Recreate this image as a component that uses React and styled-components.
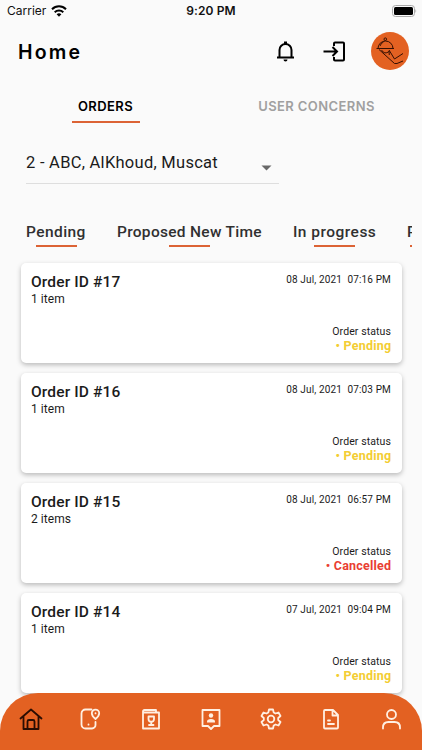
import React from "react";
import styled, { createGlobalStyle } from "styled-components";

const GlobalStyle = createGlobalStyle`
  * {
    box-sizing: border-box;
  }
  body {
    margin: 0;
    background: #fafafa;
    font-family: Roboto, "Liberation Sans", sans-serif;
    color: #1b1b1b;
  }
`;
const Screen = styled.div`
  width: 422px;
  height: 750px;
  display: flex;
  flex-direction: column;
  overflow: hidden;
  background: #fafafa;
`;
const StatusBar = styled.div`
  height: 22px;
  display: grid;
  grid-template-columns: 1fr auto 1fr;
  align-items: center;
  padding: 0 5px 0 7px;
  font-family: Inter, sans-serif;
  font-size: 12px;
  line-height: 22px;
  color: #111;
`;
const Carrier = styled.div`
  display: flex;
  align-items: center;
  gap: 5px;
`;
const Clock = styled.div`
  font-weight: 600;
  letter-spacing: 0.1px;
  margin-right: 2px;
`;
const Battery = styled.svg`
  justify-self: end;
  margin-bottom: 1px;
`;
const Header = styled.header`
  height: 60px;
  display: flex;
  align-items: center;
  padding: 0 13px 2px 18px;
`;
const Title = styled.h1`
  flex: 1;
  margin: 0;
  padding-top: 1px;
  font-family: Inter, sans-serif;
  font-size: 19.5px;
  font-weight: 600;
  letter-spacing: 2.2px;
  color: #000;
`;
const HeaderIcon = styled.svg`
  width: 24px;
  height: 24px;
  margin-right: 25px;
`;
const Avatar = styled.div`
  width: 38px;
  height: 38px;
  border-radius: 50%;
  background: #e36122;
`;
const Tabs = styled.div`
  height: 41px;
  display: flex;
`;
const Tab = styled.div`
  flex: 1;
  display: flex;
  flex-direction: column;
  align-items: center;
  font-family: Inter, sans-serif;
  font-size: 13px;
  font-weight: 600;
  line-height: 18px;
  padding-top: 15px;
  letter-spacing: 0.4px;
  color: ${(p) => (p.$active ? "#000" : "#a0a0a0")};
  &::after {
    content: "";
    width: 68px;
    height: 2px;
    margin-top: 6px;
    background: ${(p) => (p.$active ? "#dc6335" : "transparent")};
  }
`;
const Select = styled.div`
  width: 253px;
  height: 41px;
  margin: 20px 0 0 26px;
  padding: 11px 6px 0 0;
  border-bottom: 1px solid #dedede;
  display: flex;
  justify-content: space-between;
  font-size: 16.5px;
  line-height: 18px;
  letter-spacing: 0.27px;
`;
const Caret = styled.svg`
  margin-top: 11px;
`;
const Filters = styled.div`
  height: 79px;
  width: 386px;
  margin-left: 26px;
  padding-top: 38px;
  display: flex;
  gap: 31px;
  overflow: hidden;
  flex: none;
`;
const Filter = styled.div`
  flex: none;
  width: ${(p) => p.$width}px;
  font-size: 15.5px;
  font-weight: 500;
  line-height: 20px;
  letter-spacing: ${(p) => p.$spacing}px;
  white-space: nowrap;
  color: #303030;
  &::after {
    content: "";
    display: block;
    width: 41px;
    height: 2px;
    margin: 3px auto 0;
    background: #dc6335;
  }
`;
const Orders = styled.main`
  flex: 1;
  min-height: 0;
  display: flex;
  flex-direction: column;
  gap: 10px;
  padding: 0 20px 0 21px;
`;
const Card = styled.article`
  flex: none;
  height: 100px;
  padding: 10px 11px 0 10px;
  display: flex;
  justify-content: space-between;
  border-radius: 5px;
  background: #fff;
  box-shadow: 0 2px 5px rgba(0, 0, 0, 0.26);
`;
const OrderTitle = styled.div`
  font-size: 15.5px;
  font-weight: 500;
  line-height: 19px;
  letter-spacing: 0.15px;
`;
const ItemCount = styled.div`
  font-size: 12px;
  line-height: 14px;
  letter-spacing: 0.05px;
`;
const Details = styled.div`
  text-align: right;
  font-size: 10.5px;
  line-height: 12px;
  letter-spacing: 0.1px;
`;
const OrderDate = styled.div`
  white-space: pre;
  height: 53px;
  padding-top: 1px;
  font-size: 10px;
  letter-spacing: 0.15px;
`;
const Status = styled.div`
  font-size: 12.5px;
  font-weight: 700;
  line-height: 15px;
  letter-spacing: 0.22px;
  margin-right: -0.3px;
  color: ${(p) => (p.$status === "Cancelled" ? "#e93e32" : "#f3cd32")};
`;
const BottomBar = styled.nav`
  position: relative;
  flex: none;
  height: 57px;
  padding: 0 1px;
  display: flex;
  border-radius: 38px 38px 0 0;
  background: #e36122;
`;
const NavItem = styled.div`
  flex: 1;
  display: flex;
  justify-content: center;
  padding-top: 14px;
  color: ${(p) => (p.$active ? "#2a0d02" : "#fff0e3")};
`;

const orders = [
  { id: 17, items: "1 item", date: "08 Jul, 2021  07:16 PM", status: "Pending" },
  { id: 16, items: "1 item", date: "08 Jul, 2021  07:03 PM", status: "Pending" },
  { id: 15, items: "2 items", date: "08 Jul, 2021  06:57 PM", status: "Cancelled" },
  { id: 14, items: "1 item", date: "07 Jul, 2021  09:04 PM", status: "Pending" },
];

const filters = [
  { label: "Pending", width: 60, spacing: 0.42 },
  { label: "Proposed New Time", width: 145, spacing: 0.3 },
  { label: "In progress", width: 83, spacing: 0.48 },
  { label: "Ready", width: 46, spacing: 0.3 },
];

const navIcons = [
  <>
    <path d="M1.500 11.500 12 2.500l10.500 9M4.500 9.500V22h15V9.500" />
    <path d="M8.500 22v-7.500q0-1.500 1.500-1.500h4q1.500 0 1.500 1.500v7.500" />
  </>,
  <>
    <path d="M12.500 2.500H6.500a4 4 0 0 0-4 4v11a4 4 0 0 0 4 4h6.500a3.500 3.500 0 0 0 3.500-3.500V15" />
    <path d="M16.500 12s-3.700-3-3.700-5.700a3.700 3.700 0 0 1 7.400 0c0 2.700-3.700 5.700-3.700 5.700Z" />
    <path d="M16.500 6.200v.2M9.500 17.500v.2" />
  </>,
  <>
    <path d="M4 5.500h16V21.500H4zM4 5.500V4.500Q4 3 5.500 3H17v2.500" />
    <path d="M9.500 9.500h5.500v2.500a2.750 2.750 0 0 1-5.500 0zM12.250 14.800V18M10 18h4.500" />
  </>,
  <>
    <path d="M3.500 3h17v16h-5.500l-3 3-3-3H3.500z" />
    <circle cx="12" cy="8.500" r="2.200" fill="currentColor" stroke="none" />
    <path d="M8 15.500v-1q0-2.500 4-2.500t4 2.500v1z" fill="currentColor" stroke="none" />
  </>,
  <>
    <path d="M10 2.500h4l.7 3 1.800 1 3-1 2 3.500-2.300 2v2l2.300 2-2 3.500-3-1-1.800 1-.7 3h-4l-.7-3-1.800-1-3 1-2-3.500 2.300-2v-2L2.500 9l2-3.500 3 1 1.800-1z" />
    <circle cx="12" cy="12" r="3.300" />
  </>,
  <>
    <path d="M6 3h8l5 5v12.500q0 1-1 1H6q-1 0-1-1V4q0-1 1-1zM13.500 3v5.500H19" />
    <path d="M9 13.500h2M9 17h6" />
  </>,
  <>
    <circle cx="12.500" cy="7.500" r="4.500" />
    <path d="M4 21.500v-1q0-5.500 5.500-5.500h6q5.500 0 5.500 5.500v1" />
  </>,
];

function Wifi() {
  return (
    <svg width="16" height="12" viewBox="0 0 16 12">
      <g fill="none" stroke="#000" strokeWidth="2">
        <path d="M1 4.200a10 10 0 0 1 14 0" />
        <path d="M3.700 7.200a6.200 6.200 0 0 1 8.600 0" />
      </g>
      <path d="M5.600 9.200a3.600 3.600 0 0 1 4.800 0L8 11.700z" />
    </svg>
  );
}

function ServingHand() {
  return (
    <svg width="38" height="38" viewBox="0 0 38 38" fill="none" stroke="#351003" strokeWidth="1">
      <circle cx="14.300" cy="7.200" r="1.300" />
      <path d="M7 16.500a7.500 7.500 0 0 1 15 0M5.500 16.500h17.500M9 14q1-3 3.500-4" />
      <path d="M8 17.500 23.500 31.500h2.500l6-2.500M10.500 18q3 5 7.500 1.500M18 19l.3 4M18 18l5.500 9 8.500-5.500" />
    </svg>
  );
}

export default function App() {
  return (
    <Screen>
      <GlobalStyle />
      <StatusBar>
        <Carrier>
          Carrier
          <Wifi />
        </Carrier>
        <Clock>9:20 PM</Clock>
        <Battery width="25" height="12" viewBox="0 0 25 12">
          <rect x=".5" y=".5" width="22" height="11" rx="3" fill="none" stroke="#aaa" />
          <rect x="2" y="2" width="19" height="8" rx="1.500" />
          <path d="M23.500 4v4q1.500-2 0-4" fill="#999" />
        </Battery>
      </StatusBar>

      <Header>
        <Title>Home</Title>
        <HeaderIcon viewBox="0 0 24 24" fill="none" stroke="#000" strokeWidth="2">
          <path d="M4 18.500h17M6.500 18V11a6 6 0 0 1 12 0v7" />
          <path d="M12.500 2.500V5" strokeWidth="3" />
          <path d="M10.500 20.500h4a2 2 0 0 1-4 0" fill="#000" stroke="none" />
        </HeaderIcon>
        <HeaderIcon viewBox="0 0 24 24" fill="none" stroke="#000" strokeWidth="2">
          <path d="M1.500 12.500h13M10.500 8 15 12.500l-4.500 4.500M12 7V4.500q0-1 1-1h8q1 0 1 1v16q0 1-1 1h-8q-1 0-1-1V18" />
        </HeaderIcon>
        <Avatar>
          <ServingHand />
        </Avatar>
      </Header>

      <Tabs>
        <Tab $active>ORDERS</Tab>
        <Tab>USER CONCERNS</Tab>
      </Tabs>

      <Select>
        2 - ABC, AlKhoud, Muscat
        <Caret width="12" height="6" viewBox="0 0 12 6" fill="#686868">
          <path d="M.5.5h10l-5 5z" />
        </Caret>
      </Select>

      <Filters>
        {filters.map((f) => (
          <Filter key={f.label} $width={f.width} $spacing={f.spacing}>
            {f.label}
          </Filter>
        ))}
      </Filters>

      <Orders>
        {orders.map((order) => (
          <Card key={order.id}>
            <div>
              <OrderTitle>Order ID #{order.id}</OrderTitle>
              <ItemCount>{order.items}</ItemCount>
            </div>
            <Details>
              <OrderDate>{order.date}</OrderDate>
              Order status
              <Status $status={order.status}>• {order.status}</Status>
            </Details>
          </Card>
        ))}
      </Orders>

      <BottomBar>
        {navIcons.map((icon, i) => (
          <NavItem key={i} $active={i === 0}>
            <svg width="24" height="24" viewBox="0 0 24 24" fill="none" stroke="currentColor" strokeWidth="1.800" strokeLinecap="round" strokeLinejoin="round">
              {icon}
            </svg>
          </NavItem>
        ))}
      </BottomBar>
    </Screen>
  );
}
